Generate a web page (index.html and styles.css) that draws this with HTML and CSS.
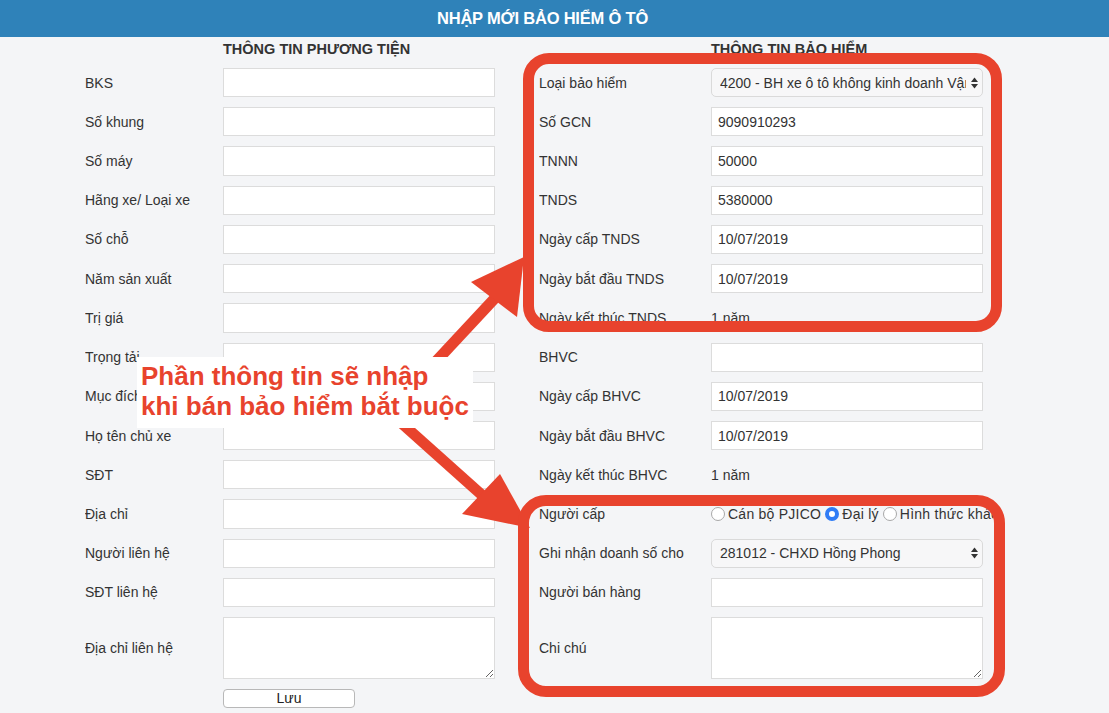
FILE: index.html
```html
<!DOCTYPE html>
<html lang="vi">
<head>
<meta charset="utf-8">
<title>Nhập mới bảo hiểm ô tô</title>
<link rel="stylesheet" href="styles.css">
</head>
<body>
<header class="topbar"><h1 class="topbar-title">NHẬP MỚI BẢO HIỂM Ô TÔ</h1></header>

<main class="form">
  <section class="col col-left">
    <h2 class="col-title">THÔNG TIN PHƯƠNG TIỆN</h2>
    <div class="grid">
      <label class="lbl">BKS</label><input class="field" type="text">
      <label class="lbl">Số khung</label><input class="field" type="text">
      <label class="lbl">Số máy</label><input class="field" type="text">
      <label class="lbl">Hãng xe/ Loại xe</label><input class="field" type="text">
      <label class="lbl">Số chỗ</label><input class="field" type="text">
      <label class="lbl">Năm sản xuất</label><input class="field" type="text">
      <label class="lbl">Trị giá</label><input class="field" type="text">
      <label class="lbl">Trọng tải</label><input class="field" type="text">
      <label class="lbl">Mục đích</label><input class="field" type="text">
      <label class="lbl">Họ tên chủ xe</label><input class="field" type="text">
      <label class="lbl">SĐT</label><input class="field" type="text">
      <label class="lbl">Địa chỉ</label><input class="field" type="text">
      <label class="lbl">Người liên hệ</label><input class="field" type="text">
      <label class="lbl">SĐT liên hệ</label><input class="field" type="text">
      <label class="lbl">Địa chỉ liên hệ</label><textarea class="area"></textarea>
      <span></span><button class="btn" type="button">Lưu</button>
    </div>
  </section>

  <section class="col col-right">
    <h2 class="col-title">THÔNG TIN BẢO HIỂM</h2>
    <div class="grid">
      <label class="lbl">Loại bảo hiểm</label>
      <div class="select"><span class="select-text">4200 - BH xe ô tô không kinh doanh Vận tải</span><svg class="select-arrows" width="7" height="12" viewBox="0 0 7 12"><polygon points="0,5 3.5,0.5 7,5" fill="#333"/><polygon points="0,7 3.5,11.5 7,7" fill="#333"/></svg></div>
      <label class="lbl">Số GCN</label><input class="field" type="text" value="9090910293">
      <label class="lbl">TNNN</label><input class="field" type="text" value="50000">
      <label class="lbl">TNDS</label><input class="field" type="text" value="5380000">
      <label class="lbl">Ngày cấp TNDS</label><input class="field" type="text" value="10/07/2019">
      <label class="lbl">Ngày bắt đầu TNDS</label><input class="field" type="text" value="10/07/2019">
      <label class="lbl">Ngày kết thúc TNDS</label><span class="plain">1 năm</span>
      <label class="lbl">BHVC</label><input class="field" type="text">
      <label class="lbl">Ngày cấp BHVC</label><input class="field" type="text" value="10/07/2019">
      <label class="lbl">Ngày bắt đầu BHVC</label><input class="field" type="text" value="10/07/2019">
      <label class="lbl">Ngày kết thúc BHVC</label><span class="plain">1 năm</span>
      <label class="lbl">Người cấp</label>
      <div class="radios">
        <input class="radio" type="radio" name="nc"><span class="radio-text">Cán bộ PJICO</span>
        <input class="radio" type="radio" name="nc" checked><span class="radio-text">Đại lý</span>
        <input class="radio" type="radio" name="nc"><span class="radio-text">Hình thức khác</span>
      </div>
      <label class="lbl">Ghi nhận doanh số cho</label>
      <div class="select"><span class="select-text">281012 - CHXD Hồng Phong</span><svg class="select-arrows" width="7" height="12" viewBox="0 0 7 12"><polygon points="0,5 3.5,0.5 7,5" fill="#333"/><polygon points="0,7 3.5,11.5 7,7" fill="#333"/></svg></div>
      <label class="lbl">Người bán hàng</label><input class="field" type="text">
      <label class="lbl">Chi chú</label><textarea class="area"></textarea>
    </div>
  </section>
</main>

<div class="overlay">
  <svg class="arrows" width="1109" height="713" viewBox="0 0 1109 713">
    <line x1="428" y1="370" x2="496" y2="297" stroke="#e8432d" stroke-width="11"/>
    <polygon points="471,282 524,257 517,317" fill="#e8432d"/>
    <line x1="398" y1="420" x2="483" y2="496" stroke="#e8432d" stroke-width="11"/>
    <polygon points="462,514 500,474 530,528" fill="#e8432d"/>
  </svg>
  <div class="redbox redbox-top"></div>
  <div class="redbox redbox-bottom"></div>
  <div class="callout">Phần thông tin sẽ nhập<br>khi bán bảo hiểm bắt buộc</div>
</div>
</body>
</html>
```

FILE: styles.css
```css
* { box-sizing: border-box; }

html, body {
  margin: 0;
  padding: 0;
}

body {
  position: relative;
  width: 1109px;
  height: 713px;
  overflow: hidden;
  background: #f4f5f7;
  font-family: "Liberation Sans", Arial, sans-serif;
  font-size: 14px;
  color: #333;
}

.topbar {
  height: 37px;
  background: #2f82b9;
  display: flex;
  align-items: center;
  justify-content: center;
  padding-right: 24px;
}

.topbar-title {
  margin: 0;
  font-size: 16.5px;
  font-weight: bold;
  color: #fff;
  letter-spacing: -0.2px;
}

.form {
  display: flex;
  gap: 44px;
  padding-left: 85px;
}

.col-left { width: 410px; }
.col-right { width: 444px; }

.col-title {
  margin: 4px 0 10px;
  font-size: 14.5px;
  line-height: 17px;
  font-weight: bold;
  color: #333;
  white-space: nowrap;
}

.col-left .col-title { padding-left: 138px; }
.col-right .col-title { padding-left: 172px; }

.grid {
  display: grid;
  grid-auto-rows: minmax(29.23px, auto);
  row-gap: 10px;
  align-items: center;
}

.col-left .grid { grid-template-columns: 138px 272px; }
.col-right .grid { grid-template-columns: 172px 272px; }

.lbl {
  white-space: nowrap;
  overflow: hidden;
  font-size: 14px;
  color: #333;
}

.field {
  height: 29.23px;
  width: 272px;
  margin: 0;
  padding: 0 6px;
  border: 1px solid #dcdcdc;
  background: #fff;
  font-family: "Liberation Sans", Arial, sans-serif;
  font-size: 14px;
  color: #333;
  outline: none;
}

.area {
  height: 62px;
  width: 272px;
  margin: 0;
  padding: 4px 6px;
  border: 1px solid #dcdcdc;
  background: #fff;
  font-family: "Liberation Sans", Arial, sans-serif;
  font-size: 14px;
  display: block;
}

.plain {
  font-size: 14px;
  color: #333;
}

.select {
  height: 29.23px;
  width: 272px;
  display: flex;
  align-items: center;
  gap: 5px;
  padding: 0 4px 0 8px;
  border: 1px solid #dadada;
  border-radius: 5px;
  background: #f7f7f8;
}

.select-text {
  flex: 1;
  overflow: hidden;
  white-space: nowrap;
  font-size: 14px;
  color: #333;
}

.select-arrows { flex: none; }

.radios {
  display: flex;
  align-items: center;
  white-space: nowrap;
  width: 282px;
  overflow: hidden;
}

.radio {
  appearance: none;
  -webkit-appearance: none;
  flex: none;
  width: 14px;
  height: 14px;
  margin: 0 3px 0 0;
  border: 1px solid #a8a8a8;
  border-radius: 50%;
  background: #fff;
}

.radio:checked {
  border: 4.5px solid #2f7cf6;
  background: #fff;
}

.radio-text {
  margin-right: 4px;
  font-size: 14px;
  letter-spacing: 0.25px;
  color: #333;
}

.btn {
  align-self: start;
  width: 132px;
  height: 19px;
  padding: 0;
  border: 1px solid #b8b8b8;
  border-radius: 4px;
  background: #fff;
  font-family: "Liberation Sans", Arial, sans-serif;
  font-size: 14px;
  line-height: 17px;
  color: #222;
}

/* annotation overlay */
.overlay {
  position: absolute;
  left: 0;
  top: 0;
  width: 1109px;
  height: 713px;
  pointer-events: none;
}

.arrows {
  position: absolute;
  left: 0;
  top: 0;
}

.redbox {
  position: absolute;
  border: 11px solid #e8432d;
  border-radius: 26px;
}

.redbox-top {
  left: 523px;
  top: 53px;
  width: 479px;
  height: 279px;
}

.redbox-bottom {
  left: 518px;
  top: 495px;
  width: 487px;
  height: 202px;
  border-radius: 28px;
}

.callout {
  position: absolute;
  left: 137px;
  top: 357px;
  width: 336px;
  height: 71px;
  padding: 4px 0 0 4px;
  background: #fff;
  font-family: "Liberation Sans", Arial, sans-serif;
  font-weight: bold;
  font-size: 26px;
  line-height: 30px;
  color: #e8432d;
  white-space: nowrap;
}
```
